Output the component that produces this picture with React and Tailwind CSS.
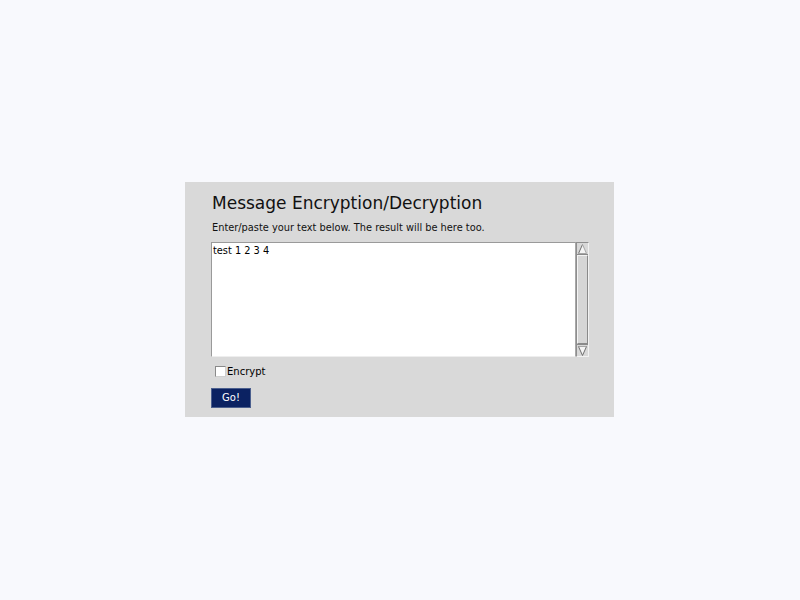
export default function App() {
  return (
    <div className="min-h-screen w-full bg-[#f8f9fd] flex items-center justify-center font-['DejaVu_Sans',sans-serif]">
      <div className="w-[429px] h-[235px] bg-[#d9d9d9] pl-[26px] pr-[25px] pt-[11px] mr-px -mt-px">
        {/* Heading */}
        <h1 className="text-[17px] leading-[20px] text-[#111] pl-px">Message Encryption/Decryption</h1>
        <p className="text-[9.8px] leading-[12px] text-[#111] mt-[9px] pl-px">
          Enter/paste your text below. The result will be here too.
        </p>

        {/* Text area with scrollbar */}
        <div className="flex mt-[8px] h-[115px]">
          <div className="flex-1 bg-white border-t border-l border-r border-b border-t-[#9a9a9a] border-l-[#9a9a9a] border-r-[#a8a8a8] border-b-[#eeeeee] text-[9.8px] leading-[12px] text-black pl-px pt-[2px]">
            test 1 2 3 4
          </div>
          <div className="w-[13px] bg-[#d4d4d4] border border-t-[#8e8e8e] border-l-[#8e8e8e] border-r-[#f2f2f2] border-b-[#f2f2f2] flex flex-col">
            <div className="h-[12px] bg-[#d8d8d8] border-b border-[#8a8a8a] flex items-center justify-center">
              <svg width="9" height="10" viewBox="0 0 9 10">
                <path d="M4.5 0.5 L8.5 9.5 L0.5 9.5 Z" fill="#f4f4f4" />
                <path d="M4.5 0.5 L0.5 9.5" stroke="#6f6f6f" strokeWidth="1" fill="none" />
                <path d="M4.5 0.5 L8.5 9.5 L0.5 9.5" stroke="#a6a6a6" strokeWidth="1" fill="none" />
              </svg>
            </div>
            <div className="flex-1 bg-[#d6d6d6] border border-t-[#f4f4f4] border-l-[#f4f4f4] border-r-[#8a8a8a] border-b-[#8a8a8a]" />
            <div className="h-[12px] bg-[#d8d8d8] border-t border-[#8a8a8a] flex items-center justify-center">
              <svg width="9" height="10" viewBox="0 0 9 10">
                <path d="M0.5 0.5 L8.5 0.5 L4.5 9.5 Z" fill="#f4f4f4" />
                <path d="M0.5 0.5 L8.5 0.5" stroke="#a6a6a6" strokeWidth="1" fill="none" />
                <path d="M0.5 0.5 L4.5 9.5 L8.5 0.5" stroke="#6f6f6f" strokeWidth="1" fill="none" />
              </svg>
            </div>
          </div>
        </div>

        {/* Checkbox */}
        <label className="flex items-center mt-[9px] ml-[4px] text-[10px] leading-[11px] text-black">
          <span className="w-[11px] h-[11px] bg-white border border-t-[#8a8a8a] border-l-[#8a8a8a] border-r-[#cfcfcf] border-b-[#cfcfcf] mr-[1px]" />
          Encrypt
        </label>

        {/* Button */}
        <button className="mt-[11px] w-[40px] h-[20px] bg-[#0b2262] border border-[#4b5f8e] text-white text-[10px] leading-[12px] flex items-center justify-center">
          Go!
        </button>
      </div>
    </div>
  );
}
